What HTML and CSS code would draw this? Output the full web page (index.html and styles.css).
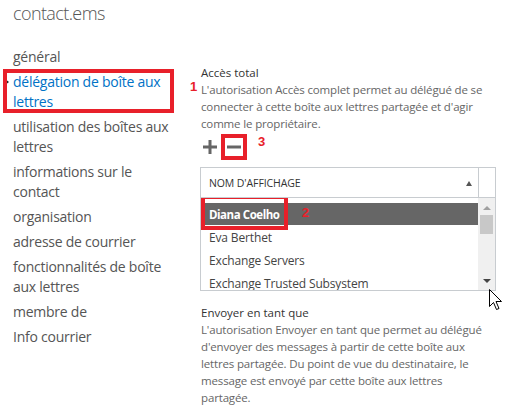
FILE: index.html
```html
<!DOCTYPE html>
<html lang="fr">
<head>
<meta charset="utf-8">
<title>contact.ems</title>
<link rel="stylesheet" href="styles.css">
</head>
<body>
<div class="page">
  <h1 class="title">contact.ems</h1>
  <div class="layout">
    <nav class="nav">
      <ul class="nav-list">
        <li class="nav-item">général</li>
        <li class="nav-item active">
          <span class="caret"></span>délégation de boîte aux lettres
          <span class="mark mark-nav"></span>
          <span class="num num-1">1</span>
        </li>
        <li class="nav-item">utilisation des boîtes aux lettres</li>
        <li class="nav-item">informations sur le contact</li>
        <li class="nav-item">organisation</li>
        <li class="nav-item">adresse de courrier</li>
        <li class="nav-item">fonctionnalités de boîte aux lettres</li>
        <li class="nav-item">membre de</li>
        <li class="nav-item">Info courrier</li>
      </ul>
    </nav>
    <main class="content">
      <section class="perm">
        <h2 class="perm-title">Accès total</h2>
        <p class="perm-desc">L'autorisation Accès complet permet au délégué de se connecter à cette boîte aux lettres partagée et d'agir comme le propriétaire.</p>
      </section>
      <div class="toolbar">
        <span class="tool">
          <svg width="14" height="14" viewBox="0 0 14 14"><path d="M7 0V14M0 7H14" stroke="#666" stroke-width="3"/></svg>
        </span>
        <span class="tool tool-minus">
          <svg width="14" height="14" viewBox="0 0 14 14"><path d="M0 7H14" stroke="#666" stroke-width="3"/></svg>
          <span class="mark mark-minus"></span>
          <span class="num num-3">3</span>
        </span>
      </div>
      <div class="grid">
        <div class="grid-head">
          <div class="head-cell">NOM D'AFFICHAGE<span class="sort"></span></div>
          <div class="head-gap"></div>
        </div>
        <div class="grid-body">
          <ul class="rows">
            <li class="row selected">
              <span class="row-text">Diana Coelho</span>
              <span class="mark mark-row"></span>
              <span class="num num-2">2</span>
            </li>
            <li class="row"><span class="row-text">Eva Berthet</span></li>
            <li class="row"><span class="row-text">Exchange Servers</span></li>
            <li class="row"><span class="row-text">Exchange Trusted Subsystem</span></li>
          </ul>
          <div class="scrollbar">
            <span class="arrow-up"></span>
            <span class="thumb"></span>
            <span class="track"></span>
            <span class="arrow-down"></span>
          </div>
        </div>
      </div>
      <section class="perm perm-send">
        <h2 class="perm-title">Envoyer en tant que</h2>
        <p class="perm-desc">L'autorisation Envoyer en tant que permet au délégué d'envoyer des messages à partir de cette boîte aux lettres partagée. Du point de vue du destinataire, le message est envoyé par cette boîte aux lettres partagée.</p>
      </section>
    </main>
  </div>
  <svg class="cursor" width="13" height="21" viewBox="0 0 13 21"><path d="M0.5 0.5V17.5L4.5 13.5L7.5 20.5L10 19.5L7 12.5H12.5Z" fill="#fff" stroke="#000" stroke-width="1" stroke-linejoin="miter"/></svg>
</div>
</body>
</html>
```

FILE: styles.css
```css
* { box-sizing: border-box; }
html, body { margin: 0; padding: 0; background: #fff; }
body {
  font-family: "Open Sans", "Noto Sans", sans-serif;
  color: #333;
  width: 509px;
  height: 409px;
  overflow: hidden;
}
.page {
  position: relative;
  padding-left: 13px;
}
.title {
  margin: 0;
  font-size: 18px;
  font-weight: 300;
  line-height: 26px;
  color: #555;
  letter-spacing: -0.6px;
}
.layout {
  display: flex;
  margin-top: 21px;
}
.nav {
  width: 187px;
  flex: none;
}
.nav-list {
  list-style: none;
  margin: 0;
  padding: 0;
  display: flex;
  flex-direction: column;
  gap: 5px;
}
.nav-item {
  position: relative;
  width: 162px;
  font-size: 14px;
  line-height: 20px;
  color: #555;
  letter-spacing: -0.25px;
}
.nav-item.active { color: #0072c6; }
.caret {
  position: absolute;
  left: -8px;
  top: 7px;
  width: 0;
  height: 0;
  border-top: 3px solid transparent;
  border-bottom: 3px solid transparent;
  border-left: 4px solid #222;
}
.mark {
  position: absolute;
  border: 4px solid #e8202a;
  pointer-events: none;
}
.mark-nav {
  left: -10px;
  top: -3px;
  width: 171px;
  height: 44px;
}
.num {
  position: absolute;
  font-family: "Liberation Sans", Arial, sans-serif;
  font-weight: bold;
  font-size: 13px;
  line-height: 15px;
  color: #e8202a;
}
.num-1 { left: 177px; top: 7px; }
.content {
  flex: none;
  width: 291px;
  padding-top: 17px;
}
.perm-title {
  margin: 0;
  font-size: 11.5px;
  font-weight: 400;
  line-height: 17px;
  color: #333;
  padding-left: 1px;
}
.perm-desc {
  margin: 0;
  font-size: 11.5px;
  line-height: 17px;
  color: #666;
  padding-left: 1px;
  letter-spacing: -0.15px;
}
.toolbar {
  display: flex;
  align-items: center;
  gap: 10px;
  height: 25px;
  margin-top: 2px;
  margin-bottom: 8px;
  padding-left: 3px;
}
.tool {
  position: relative;
  display: flex;
  width: 14px;
  height: 14px;
}
.mark-minus {
  left: -6px;
  top: -6px;
  width: 26px;
  height: 26px;
}
.num-3 { left: 31px; top: -6px; }
.grid {
  width: 296px;
  border: 1px solid #c8ccd0;
}
.grid-head {
  display: flex;
  height: 30px;
  border-bottom: 1px solid #c8ccd0;
}
.head-cell {
  position: relative;
  flex: 1;
  display: flex;
  align-items: center;
  padding-left: 8px;
  font-size: 10.5px;
  color: #333;
  letter-spacing: -0.1px;
}
.sort {
  position: absolute;
  right: 6px;
  top: 13px;
  width: 0;
  height: 0;
  border-left: 3px solid transparent;
  border-right: 3px solid transparent;
  border-bottom: 5px solid #555;
}
.head-gap {
  width: 17px;
  border-left: 1px solid #c8ccd0;
}
.grid-body {
  display: flex;
  height: 92px;
  overflow: hidden;
}
.rows {
  flex: 1;
  list-style: none;
  margin: 0;
  padding: 5px 0 0;
}
.row {
  position: relative;
  height: 23px;
  display: flex;
  align-items: center;
  padding-left: 8px;
  font-size: 12px;
  color: #444;
  letter-spacing: -0.15px;
}
.row.selected {
  background: #666;
  color: #fff;
  font-weight: bold;
  font-size: 11.5px;
  letter-spacing: -0.45px;
  height: 22px;
  margin-bottom: 1px;
}
.mark-row {
  left: 0;
  top: -8px;
  width: 87px;
  height: 35px;
}
.num-2 { left: 101px; top: 2px; letter-spacing: 0; }
.scrollbar {
  width: 17px;
  background: #f0f0f0;
  display: flex;
  flex-direction: column;
  align-items: center;
  padding-top: 8px;
}
.arrow-up {
  width: 0; height: 0;
  border-left: 4px solid transparent;
  border-right: 4px solid transparent;
  border-bottom: 4px solid #a0a0a0;
}
.thumb {
  width: 13px;
  height: 19px;
  background: #c8c8c8;
  margin-top: 5px;
}
.track { flex: 1; }
.arrow-down {
  width: 0; height: 0;
  border-left: 4px solid transparent;
  border-right: 4px solid transparent;
  border-top: 4px solid #444;
  margin-bottom: 7px;
}
.perm-send { margin-top: 13px; }
.cursor {
  position: absolute;
  left: 489px;
  top: 289px;
}
```
